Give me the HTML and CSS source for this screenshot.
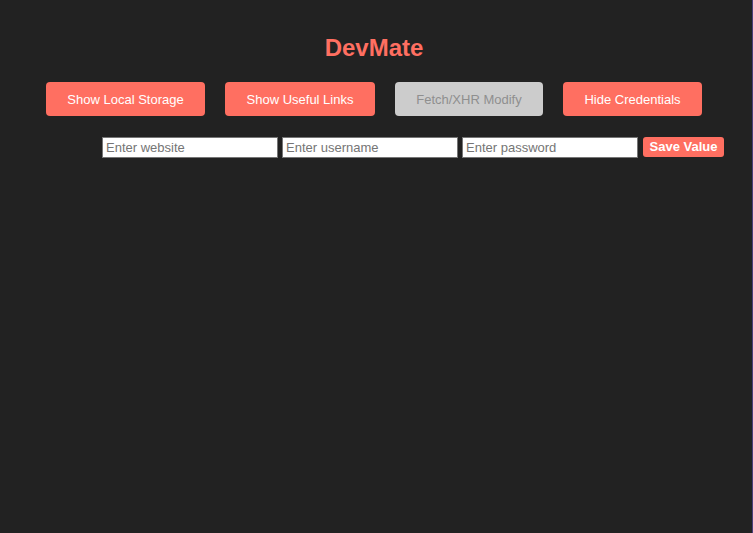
FILE: index.html
```html
<!DOCTYPE html>
<html>
<head>
<meta charset="utf-8">
<title>DevMate</title>
<link rel="stylesheet" href="styles.css">
</head>
<body>
<div class="app">
  <h1 class="title">DevMate</h1>
  <div class="actions">
    <button class="btn btn-storage">Show Local Storage</button>
    <button class="btn btn-links">Show Useful Links</button>
    <button class="btn btn-disabled" disabled>Fetch/XHR Modify</button>
    <button class="btn btn-hide">Hide Credentials</button>
  </div>
  <div class="form-row">
    <input class="field" type="text" placeholder="Enter website">
    <input class="field" type="text" placeholder="Enter username">
    <input class="field" type="password" placeholder="Enter password">
    <button class="save">Save Value</button>
  </div>
</div>
</body>
</html>
```

FILE: styles.css
```css
html, body {
  margin: 0;
  padding: 0;
  background: #222222;
}
body {
  min-height: 100vh;
  box-sizing: border-box;
  border-right: 1px solid #4b3c78;
  font-family: "Liberation Sans", Arial, sans-serif;
}
.app {
  padding-top: 34px;
}
.title {
  margin: 0;
  text-align: center;
  font-size: 24px;
  line-height: 28px;
  font-weight: bold;
  color: #ff6f61;
  padding-right: 4px;
}
.actions {
  display: flex;
  justify-content: center;
  gap: 20px;
  margin-top: 20px;
  padding-right: 4px;
}
.btn {
  font-family: "Liberation Sans", Arial, sans-serif;
  font-size: 13px;
  line-height: 16px;
  height: 34px;
  padding: 1px 20px 0;
  border: none;
  border-radius: 4px;
  background: #ff6f61;
  color: #ffffff;
  cursor: pointer;
}
.btn-storage { width: 159px; }
.btn-links { width: 150px; }
.btn-disabled {
  width: 148px;
  background: #cccccc;
  color: #8f8f8f;
  cursor: default;
}
.btn-hide { width: 139px; }
.form-row {
  display: flex;
  align-items: flex-start;
  gap: 4px;
  margin-top: 21px;
  padding-left: 102px;
}
.field {
  box-sizing: border-box;
  width: 176px;
  height: 21px;
  margin: 0;
  padding: 1px 3px;
  border: 1px solid #767676;
  background: #ffffff;
  font-family: "Liberation Sans", Arial, sans-serif;
  font-size: 13px;
  color: #222;
}
.field::placeholder {
  color: #757575;
}
.save {
  box-sizing: border-box;
  width: 81px;
  height: 20px;
  margin-left: 1px;
  padding: 0 6px;
  border: none;
  border-radius: 3px;
  background: #ff6f61;
  color: #ffffff;
  font-family: "Liberation Sans", Arial, sans-serif;
  font-size: 13px;
  font-weight: bold;
  line-height: 20px;
  cursor: pointer;
}
```
